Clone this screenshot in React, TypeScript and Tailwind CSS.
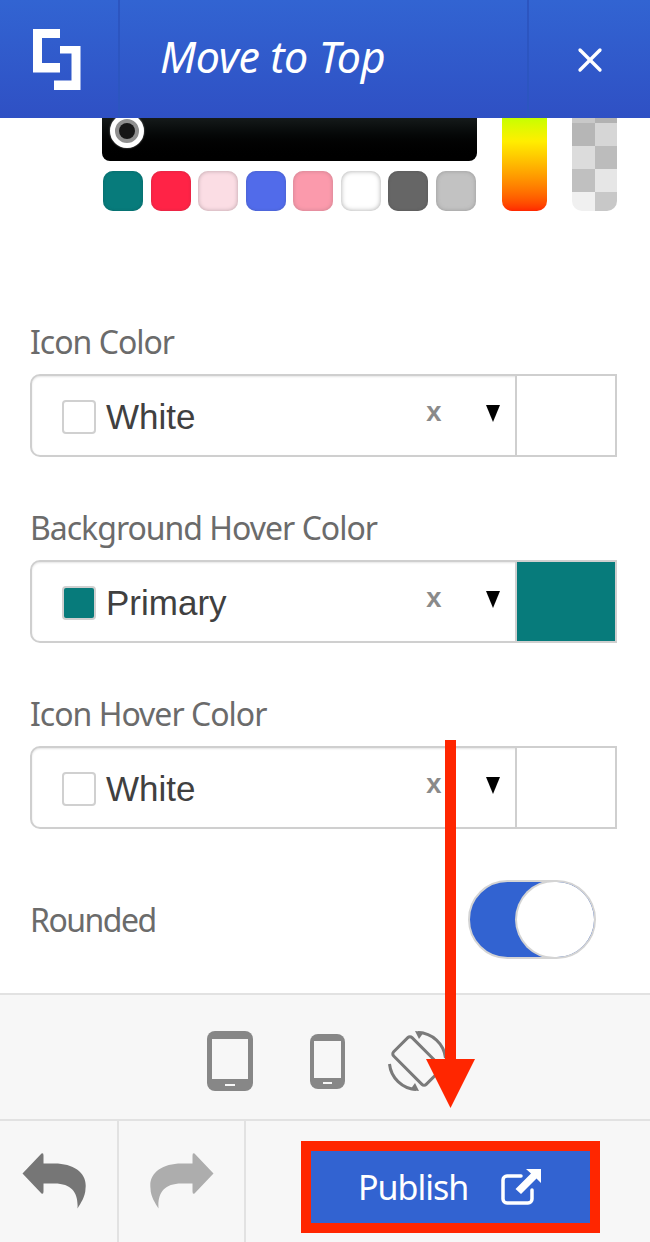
import React from 'react';
import { X } from 'lucide-react';

const swatches = [
  { id: 'teal', className: 'bg-[#077b7b] shadow-[inset_0_0_3px_#0a6666]' },
  { id: 'red', className: 'bg-[#ff2346] shadow-[inset_0_0_3px_#cc2a44]' },
  { id: 'blush', className: 'bg-[#fbdde4] shadow-[inset_0_0_4px_#b8a0a6]' },
  { id: 'blue', className: 'bg-[#516bea] shadow-[inset_0_0_3px_#4a5fc0]' },
  { id: 'pink', className: 'bg-[#fb9aac] shadow-[inset_0_0_4px_#c9808e]' },
  { id: 'white', className: 'bg-white shadow-[inset_0_0_5px_#a8a8a8]' },
  { id: 'dark', className: 'bg-[#666666] shadow-[inset_0_0_3px_#555555]' },
  { id: 'gray', className: 'bg-[#c2c2c2] shadow-[inset_0_0_4px_#999999]' },
];

const alphaCells = [
  'h-[5px] bg-[#c8c8c8]', 'h-[5px] bg-[#b2b2b2]',
  'h-[23px] bg-[#b6b6b6]', 'h-[23px] bg-[#d6d6d6]',
  'h-[23px] bg-[#dcdcdc]', 'h-[23px] bg-[#bcbcbc]',
  'h-[23px] bg-[#c0c0c0]', 'h-[23px] bg-[#e6e6e6]',
  'h-[19px] bg-[#f0f0f0]', 'h-[19px] bg-[#c8c8c8]',
];

const Logo = () => (
  <svg width="48" height="62" viewBox="33 29 48 62" fill="#ffffff">
    <polygon points="33,29 60,29 60,38 42,38 42,63 60,63 60,72.5 33,72.5" />
    <polygon points="60,46 80.500,46 80.500,90 54,90 54,80.500 71.500,80.500 71.500,53.500 60,53.500" />
  </svg>
);

const TabletIcon = () => (
  <svg width="46" height="60" viewBox="0 0 46 60">
    <rect width="46" height="60" rx="8" fill="#878787" />
    <rect x="5" y="8" width="36" height="40" fill="#f7f7f7" />
    <rect x="18" y="53" width="10" height="2" fill="#f7f7f7" />
  </svg>
);

const PhoneIcon = () => (
  <svg width="35" height="55" viewBox="0 0 35 55">
    <rect width="35" height="55" rx="8" fill="#878787" />
    <rect x="4" y="7" width="27" height="37" fill="#f7f7f7" />
    <rect x="13" y="48" width="9" height="2" fill="#f7f7f7" />
  </svg>
);

const RotateIcon = () => (
  <svg width="60" height="60" viewBox="0 0 60 60" fill="none" stroke="#7a7a7a">
    <rect x="16" y="7" width="26" height="46" rx="3" strokeWidth="3" transform="rotate(-45 29 30)" />
    <path d="M30 1.500A28.500 28.500 0 0 1 57.500 27" strokeWidth="3" />
    <path d="M1.500 33A28.500 28.500 0 0 0 28 58.500" strokeWidth="3" />
    <path d="M27 0l9 1 -5 7z" fill="#7a7a7a" strokeWidth="0" />
    <path d="M31 60l-9 -1 5 -7z" fill="#7a7a7a" strokeWidth="0" />
  </svg>
);

const ReplyIcon = ({ color, flip }: { color: string; flip?: boolean }) => (
  <svg width="64" height="56" viewBox="-0.500 -0.500 64 56" className={flip ? '-scale-x-100' : ''}>
    <path
      d="M0 20L19 0Q21 -1 21 2V10H32C52 10 65 20 63 35C63 43 58 50 55 55C56 40 50 30 32 30H21V38Q21 41 19 40Z"
      fill={color}
    />
  </svg>
);

const PublishIcon = () => (
  <svg width="40" height="36" viewBox="0 0 40 36" fill="none">
    <path d="M20 7H6a4 4 0 0 0 -4 4v19a4 4 0 0 0 4 4h21a4 4 0 0 0 4 -4v-9" stroke="#ffffff" strokeWidth="3.500" strokeLinecap="round" />
    <path d="M25 0h15v14l-4.500 -4.500 -15.500 15.500 -5.500 -5 15.500 -15.500z" fill="#ffffff" />
  </svg>
);

const ColorSelect = ({ label, value, color }: { label: string; value: string; color?: string }) => (
  <div>
    <div className="ml-[30px] font-['Noto_Sans',sans-serif] text-[32px] leading-[40px] text-[#6b6b6b] tracking-[-1px]">{label}</div>
    <div className="mt-[12px] ml-[30px] mr-[33px] flex h-[83px] border-2 border-[#cfcfcf] rounded-l-[10px] shadow-[inset_0_1px_2px_#e5e5e5]">
      <div className="flex flex-1 items-center pl-[30px] pt-[3px]">
        <span className={`w-[34px] h-[34px] rounded-[4px] border-2 border-[#d0d0d0] ${color ? 'bg-[#077b7b]' : 'bg-white'}`} />
        <span className="ml-[10px] font-['Liberation_Sans',sans-serif] text-[35px] text-[#404040]">{value}</span>
        <span className="ml-auto mb-[6px] font-['Liberation_Mono',monospace] font-bold text-[27px] leading-none text-[#8a8a8a]">x</span>
        <span className="ml-[44px] mr-[15px] mb-[8px] w-0 h-0 border-x-[7px] border-x-transparent border-t-[17px] border-t-black" />
      </div>
      <div className={`w-[100px] border-l-2 border-[#cfcfcf] ${color ? 'bg-[#077b7b]' : 'bg-white'}`} />
    </div>
  </div>
);

export default function App() {
  return (
    <div className="relative flex flex-col w-[650px] h-[1242px] overflow-hidden bg-white">
      {/* Header */}
      <header className="flex h-[118px] shrink-0 bg-gradient-to-b from-[#3264d2] to-[#2f50c4] text-white">
        <div className="flex w-[120px] items-center justify-center border-r-2 border-[#2c55c0] pr-[4px] pt-[2px]">
          <Logo />
        </div>
        <div className="flex flex-1 items-center border-r-2 border-[#2c55c0] pl-[40px] pb-[4px]">
          <h1 className="font-['Noto_Sans',sans-serif] italic text-[43px] tracking-[-0.4px]">Move to Top</h1>
        </div>
        <div className="flex w-[121px] items-center justify-center pt-[2px]">
          <X size={40} strokeWidth={2} />
        </div>
      </header>

      {/* Color picker, scrolled under the header */}
      <div className="flex shrink-0 pl-[102px] h-[93px]">
        <div className="w-[375px]">
          <div className="relative h-[43px] overflow-hidden rounded-b-[8px] bg-gradient-to-b from-[#151a1a] to-black">
            <div className="absolute left-[8px] top-[-4px] w-[34px] h-[34px] rounded-full border-[5px] border-white bg-[#8f8f8f] p-[4px] shadow-[0_0_2px_#888888]">
              <div className="w-full h-full rounded-full bg-[#161616]" />
            </div>
          </div>
          <div className="mt-[10px] ml-[1px] flex gap-[7.500px]">
            {swatches.map((swatch) => (
              <div key={swatch.id} className={`w-[40px] h-[40px] rounded-[10px] ${swatch.className}`} />
            ))}
          </div>
        </div>
        <div className="ml-[25px] w-[45px] rounded-b-[10px] bg-gradient-to-b from-[#c6ff00] via-[#ffee00] via-25% to-[#ff2600]" />
        <div className="ml-[25px] grid w-[45px] grid-cols-2 content-start overflow-hidden rounded-b-[10px]">
          {alphaCells.map((cell, i) => (
            <div key={i} className={cell} />
          ))}
        </div>
      </div>

      {/* Form */}
      <div className="flex-1">
        <div className="mt-[111px] flex flex-col gap-[51px]">
          <ColorSelect label="Icon Color" value="White" />
          <ColorSelect label="Background Hover Color" value="Primary" color="primary" />
          <ColorSelect label="Icon Hover Color" value="White" />
        </div>
        <div className="mt-[51px] flex items-center justify-between pl-[30px] pr-[54px]">
          <span className="font-['Noto_Sans',sans-serif] text-[32px] text-[#6b6b6b] tracking-[-1.5px]">Rounded</span>
          <div className="flex justify-end w-[128px] h-[79px] rounded-full border-2 border-[#d4d4d4] bg-[#3263d1] overflow-hidden">
            <div className="w-[77px] h-full rounded-full bg-white shadow-[0_0_0_2px_#d4d4d4]" />
          </div>
        </div>
      </div>

      {/* Device bar */}
      <div className="flex h-[128px] shrink-0 items-center border-y-2 border-[#e2e2e2] bg-[#f7f7f7] pl-[207px] pt-[8px]">
        <TabletIcon />
        <div className="ml-[57px]">
          <PhoneIcon />
        </div>
        <div className="ml-[43px]">
          <RotateIcon />
        </div>
      </div>

      {/* Bottom bar */}
      <div className="flex h-[121px] shrink-0 bg-[#f7f7f7]">
        <div className="flex w-[119px] items-center justify-center border-r-2 border-[#e2e2e2] pr-[9px] pb-[2px]">
          <ReplyIcon color="#767676" />
        </div>
        <div className="flex w-[127px] items-center justify-center border-r-2 border-[#e2e2e2] pb-[2px]">
          <ReplyIcon color="#adadad" flip />
        </div>
        <div className="flex flex-1 items-start pl-[55px] pt-[20px]">
          <button className="flex w-[299px] h-[92px] items-center border-[10px] border-[#ff2600] bg-[#3263d1] pl-[47px] text-white">
            <span className="font-['Noto_Sans',sans-serif] text-[34px] tracking-[-1px]">Publish</span>
            <span className="ml-[33px]">
              <PublishIcon />
            </span>
          </button>
        </div>
      </div>

      {/* Red annotation arrow */}
      <svg className="absolute left-[420px] top-[740px]" width="60" height="370" viewBox="0 0 60 370">
        <rect x="25" y="0" width="11" height="322" fill="#ff2600" />
        <polygon points="6,319 55,319 30.500,368" fill="#ff2600" />
      </svg>
    </div>
  );
}
